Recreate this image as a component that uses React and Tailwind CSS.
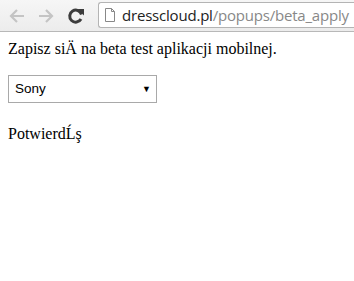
export default function App() {
  return (
    <div className="w-[354px] h-[281px] bg-white overflow-hidden">
      {/* browser toolbar */}
      <div className="h-[32px] flex items-start bg-gradient-to-b from-[#f6f6f6] to-[#ececec] border-b border-[#b8b8b8]">
        <div className="flex items-center h-[27px] mt-[2px]">
          <svg width="20" height="20" viewBox="0 0 20 20" className="ml-[7px]">
            <path d="M17 10H4M10 4L4 10L10 16" fill="none" stroke="#c4c4c4" strokeWidth="2.2" />
          </svg>
          <svg width="20" height="20" viewBox="0 0 20 20" className="ml-[9px]">
            <path d="M3 10H16M10 4L16 10L10 16" fill="none" stroke="#c4c4c4" strokeWidth="2.2" />
          </svg>
          <svg width="20" height="20" viewBox="0 0 20 20" className="ml-[10px]">
            <path d="M15.5 8.5A6 6 0 1 0 15 13" fill="none" stroke="#3c3c3c" strokeWidth="3" />
            <path d="M11.5 3L18 3L18 9.5Z" fill="#3c3c3c" />
          </svg>
        </div>
        <div className="ml-[12px] mt-[2px] h-[26px] flex-1 bg-white border border-[#b4b4b4] rounded-l-[3px] border-r-0 flex items-center overflow-hidden whitespace-nowrap">
          <svg width="12" height="14" viewBox="0 0 12 14" className="ml-[5px] shrink-0">
            <path d="M1.5 0.5H7.5L10.5 3.5V13.5H1.5Z M7.5 0.5V3.5H10.5" fill="#fff" stroke="#888" strokeWidth="1" />
          </svg>
          <span className="ml-[6px] text-[15px] font-['Open_Sans','Liberation_Sans',sans-serif] tracking-[-0.2px]">
            <span className="text-[#222]">dresscloud.pl</span>
            <span className="text-[#888]">/popups/beta_apply</span>
          </span>
        </div>
      </div>
      {/* page */}
      <div className="px-[8px] pt-[8px] font-['Liberation_Serif',serif] text-[16px] text-black leading-[18px]">
        <div>Zapisz siÄ na beta test aplikacji mobilnej.</div>
        <div className="mt-[17px] w-[149px] h-[28px] border border-[#a9a9a9] flex items-center justify-between pl-[6px] pr-[5px] font-['Liberation_Sans',sans-serif] text-[13.5px]">
          <span>Sony</span>
          <span className="text-[9px]">▼</span>
        </div>
        <div className="mt-[22px]">PotwierdĹş</div>
      </div>
    </div>
  );
}
